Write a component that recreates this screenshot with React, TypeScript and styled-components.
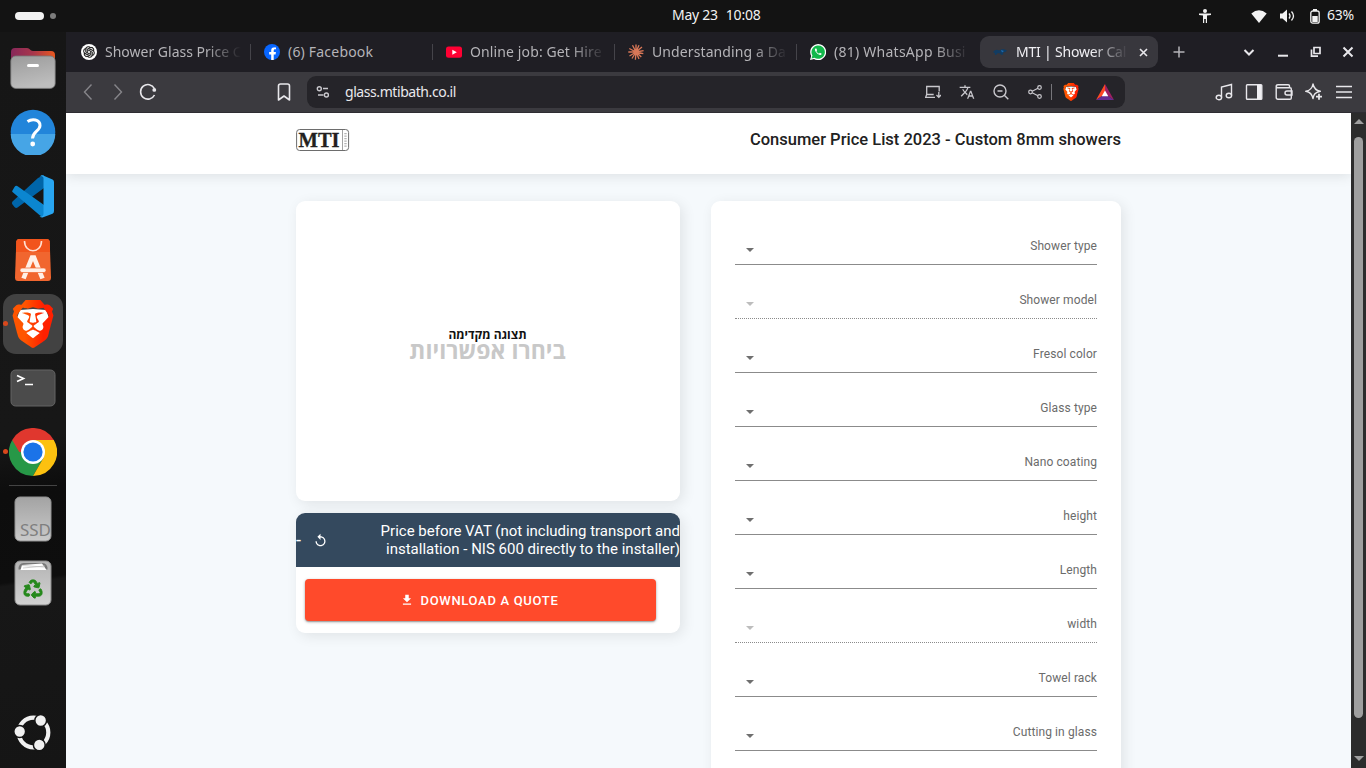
import React from 'react';
import styled, { createGlobalStyle } from 'styled-components';
import { SiBrave, SiOpenai } from 'react-icons/si';
import { FaRecycle, FaFacebookF } from 'react-icons/fa';
import { MdReplay, MdFileDownload, MdTranslate } from 'react-icons/md';

const GlobalStyle = createGlobalStyle`
  * { box-sizing: border-box; }
  body { margin: 0; overflow: hidden; background: #131313; }
`;

const uiFont = `'Noto Sans', 'Open Sans', sans-serif`;

const Desktop = styled.div`
  width: 1366px;
  height: 768px;
  display: flex;
  flex-direction: column;
  overflow: hidden;
  font-family: ${uiFont};
`;

const TopBar = styled.header`
  position: relative;
  height: 32px;
  flex: none;
  display: flex;
  align-items: center;
  justify-content: space-between;
  padding: 0 12px 0 15px;
  background: #131313;
  color: #f2f2f2;
`;

const Workspaces = styled.div`
  display: flex;
  align-items: center;
  gap: 6px;
`;

const ActiveSpace = styled.span`
  width: 29px;
  height: 8px;
  border-radius: 4px;
  background: #f2f2f2;
`;

const IdleSpace = styled.span`
  width: 6px;
  height: 6px;
  border-radius: 50%;
  background: #7d7d7d;
`;

const Clock = styled.div`
  position: absolute;
  left: 672px;
  top: 5px;
  display: flex;
  gap: 8px;
  font-size: 14px;
  line-height: 20px;
  letter-spacing: -0.25px;
`;

const Status = styled.div`
  display: flex;
  align-items: center;
  height: 32px;
  font-size: 14px;
  letter-spacing: -0.2px;
  svg { display: block; }
`;

const StatusIcon = styled.span<{ $gap: number }>`
  display: flex;
  margin-right: ${p => p.$gap}px;
`;

const BatteryText = styled.span`
  line-height: 18px;
  padding-bottom: 2px;
`;

const Workspace = styled.div`
  flex: 1;
  display: flex;
  min-height: 0;
`;

const Dock = styled.nav`
  width: 66px;
  flex: none;
  display: flex;
  flex-direction: column;
  align-items: center;
  padding: 4px 0 3px;
  background: linear-gradient(172deg, #161616 0%, #171717 55%, #0d0d0d 62%, #0e0e0e 74%, #171717 74.5%, #151515 100%);
`;

const DockItem = styled.div<{ $active?: boolean; $running?: boolean }>`
  position: relative;
  width: 60px;
  height: 60px;
  margin: 2px 0;
  flex: none;
  display: flex;
  align-items: center;
  justify-content: center;
  border-radius: 13px;
  background: ${p => (p.$active ? '#424242' : 'transparent')};
  svg { display: block; }
  &::before {
    content: '';
    display: ${p => (p.$running ? 'block' : 'none')};
    position: absolute;
    left: 0;
    top: 27px;
    width: 5px;
    height: 5px;
    border-radius: 50%;
    background: #d9481c;
  }
`;

const DockRule = styled.div`
  width: 48px;
  height: 1px;
  flex: none;
  margin: 1px 0;
  background: #444;
`;

const DockSpacer = styled.div`
  flex: 1;
`;

const Browser = styled.main`
  flex: 1;
  min-width: 0;
  display: flex;
  flex-direction: column;
`;

const TabStrip = styled.div`
  height: 40px;
  flex: none;
  display: flex;
  align-items: center;
  padding: 0 2px 0 3px;
  background: #1f1e24;
`;

const Tab = styled.div<{ $active?: boolean; $rule?: number; $width?: number }>`
  width: ${p => p.$width ?? 182}px;
  height: 32px;
  flex: none;
  padding: 0 ${p => (p.$active ? 8 : 10)}px 0 12px;
  display: flex;
  align-items: center;
  gap: 8px;
  border-radius: ${p => (p.$active ? 9 : 0)}px;
  color: ${p => (p.$active ? '#f0eff3' : '#b5b4b8')};
  background: ${p =>
    p.$active
      ? '#38373d'
      : p.$rule
        ? `linear-gradient(#45444a, #45444a) ${p.$rule}px 8px / 1px 16px no-repeat`
        : 'none'};
`;

const Favicon = styled.span`
  width: 16px;
  height: 16px;
  flex: none;
  display: flex;
  svg { display: block; }
`;

const TabTitle = styled.span<{ $spacing: number; $width: number; $fade: boolean }>`
  width: ${p => p.$width}px;
  flex: none;
  overflow: hidden;
  white-space: nowrap;
  font-size: 14px;
  line-height: 20px;
  letter-spacing: ${p => p.$spacing}px;
  mask-image: ${p => (p.$fade ? 'linear-gradient(90deg, #000 calc(100% - 36px), transparent)' : 'none')};
`;

const TabClose = styled.span`
  margin-left: auto;
  width: 16px;
  display: flex;
  justify-content: center;
`;

const NewTab = styled.span`
  width: 42px;
  display: flex;
  justify-content: center;
`;

const WindowButtons = styled.div`
  margin-left: auto;
  display: flex;
`;

const WindowButton = styled.span<{ $w: number }>`
  width: ${p => p.$w}px;
  display: flex;
  justify-content: center;
`;

const Toolbar = styled.div`
  height: 41px;
  flex: none;
  display: flex;
  align-items: center;
  padding: 0 7px 1px;
  background: #3b3a3f;
  border-bottom: 1px solid #2e2c32;
`;

const ToolButton = styled.span<{ $w?: number; $ml?: number }>`
  width: ${p => p.$w ?? 30}px;
  margin-left: ${p => p.$ml ?? 0}px;
  flex: none;
  display: flex;
  justify-content: center;
  svg { display: block; }
`;

const AddressBar = styled.div`
  width: 818px;
  height: 32px;
  flex: none;
  margin-left: 8px;
  margin-right: 84px;
  padding-right: 2px;
  display: flex;
  align-items: center;
  border-radius: 9px;
  background: #252429;
  color: #c9c8cd;
`;

const Address = styled.span`
  flex: 1;
  padding-left: 6px;
  color: #e9e8ec;
  font-size: 14px;
  letter-spacing: -0.43px;
`;

const AddressRule = styled.span`
  width: 1px;
  height: 16px;
  margin-left: -1px;
  margin-right: 3px;
  background: #77767b;
`;

const Viewport = styled.div`
  flex: 1;
  min-height: 0;
  display: flex;
`;

const Page = styled.div`
  width: 1285px;
  flex: none;
  overflow: hidden;
  background: #f5f9fc;
  font-family: Roboto, sans-serif;
`;

const SiteHeader = styled.div`
  height: 61px;
  padding: 0 230px;
  display: flex;
  justify-content: space-between;
  background: #fff;
  box-shadow: 0 2px 12px rgba(0, 0, 0, 0.1);
`;

const LogoSlot = styled.span`
  padding-top: 15px;
`;

const SiteTitle = styled.h1`
  margin: 0;
  padding-top: 17px;
  color: #212121;
  font-size: 16.5px;
  line-height: 20px;
  font-weight: 500;
  white-space: nowrap;
`;

const Columns = styled.div`
  display: flex;
  gap: 31px;
  align-items: flex-start;
  padding: 27px 230px 0;
`;

const LeftColumn = styled.div`
  width: 384px;
  display: flex;
  flex-direction: column;
  gap: 12px;
`;

const Card = styled.section`
  border-radius: 9px;
  background: #fff;
  box-shadow: 3px 3px 14px rgba(0, 0, 0, 0.09);
  overflow: hidden;
`;

const Preview = styled(Card)`
  height: 300px;
  display: flex;
  flex-direction: column;
  align-items: center;
  padding-top: 127px;
  padding-left: 1px;
  padding-right: 2px;
  direction: rtl;
  font-family: 'Open Sans', 'Noto Sans', sans-serif;
`;

const PreviewCaption = styled.div`
  color: #111;
  font-size: 12px;
  line-height: 14px;
  font-weight: 700;
`;

const PreviewHint = styled.div`
  margin-top: -3px;
  color: #c8c8c8;
  font-size: 23px;
  line-height: 22px;
  font-weight: 700;
`;

const PriceCard = styled(Card)`
  height: 120px;
`;

const PriceBar = styled.div`
  height: 54px;
  display: flex;
  align-items: center;
  color: #fff;
  background: #34495e;
`;

const PriceValue = styled.span`
  width: 17px;
  font-size: 18px;
  line-height: 18px;
`;

const PriceLabel = styled.span`
  margin-left: auto;
  text-align: right;
  font-size: 15px;
  line-height: 18px;
  white-space: nowrap;
`;

const DownloadButton = styled.button`
  width: 351px;
  height: 42px;
  margin: 12px 0 0 9px;
  padding: 1px 2px 0 0;
  display: flex;
  align-items: center;
  justify-content: center;
  gap: 7px;
  border: 0;
  border-radius: 4px;
  color: #fff;
  background: #ff4a2b;
  box-shadow: 0 1px 3px rgba(0, 0, 0, 0.35), 0 1px 1px rgba(0, 0, 0, 0.15);
  font: 500 13px/20px Roboto, sans-serif;
  letter-spacing: 0.68px;
  svg { margin: -2px 0 0 -1px; }
`;

const FormCard = styled(Card)`
  width: 410px;
  height: 640px;
  padding: 10px 24px;
`;

const Field = styled.div<{ $disabled?: boolean }>`
  height: 54px;
  display: flex;
  justify-content: space-between;
  padding: 27px 0 0 11px;
  border-bottom: 1px ${p => (p.$disabled ? 'dotted' : 'solid')} #8b8b8b;
`;

const Caret = styled.span<{ $disabled?: boolean }>`
  width: 0;
  height: 0;
  margin-top: 10px;
  border: 4px solid transparent;
  border-bottom-width: 0;
  border-top-color: ${p => (p.$disabled ? '#bdbdbd' : '#6f6f6f')};
`;

const FieldLabel = styled.span`
  color: #6b6b6b;
  font-size: 12px;
  line-height: 16px;
  letter-spacing: 0.1px;
`;

const Scrollbar = styled.div`
  width: 15px;
  flex: none;
  display: flex;
  flex-direction: column;
  align-items: center;
  padding: 6px 0 7px;
  background: #2c2c2c;
`;

const ScrollArrow = styled.span<{ $down?: boolean }>`
  width: 0;
  height: 0;
  border: 5px solid transparent;
  ${p =>
    p.$down
      ? 'border-bottom: 0; border-top-color: #9f9f9f;'
      : 'border-top: 0; border-bottom-color: #9f9f9f;'}
`;

const ScrollThumb = styled.span`
  width: 9px;
  height: 581px;
  margin: 13px 0 auto;
  border-radius: 5px;
  background: #9f9f9f;
`;

const FilesIcon = () => (
  <svg width="46" height="42" viewBox="0 0 46 42">
    <defs>
      <linearGradient id="fTab" x1="0" x2="1">
        <stop offset="0" stopColor="#87285a" />
        <stop offset="0.5" stopColor="#a8364c" />
        <stop offset="1" stopColor="#e9581f" />
      </linearGradient>
      <linearGradient id="fBody" x1="0" y1="0" x2="0.3" y2="1">
        <stop offset="0" stopColor="#9b9b9b" />
        <stop offset="1" stopColor="#bdbdbd" />
      </linearGradient>
    </defs>
    <path d="M1 14V5a4 4 0 0 1 4-4h12c3 0 3 3 6 3h18a4 4 0 0 1 4 4v8z" fill="url(#fTab)" />
    <rect x="0.8" y="9" width="44.4" height="32.4" rx="5" fill="url(#fBody)" stroke="#777" strokeWidth="0.8" />
    <rect x="17" y="17" width="12" height="3" rx="1.5" fill="#fff" />
  </svg>
);

const HelpIcon = () => (
  <svg width="46" height="46" viewBox="0 0 46 46">
    <circle cx="23" cy="23" r="22.3" fill="#2285da" />
    <path d="M.7 25h44.600a22.300 22.300 0 0 1-44.600 0z" fill="#46a5e6" />
    <path d="M17.500 12.500C22 9.500 30 10 30 16.500c0 5.500-7.500 6-7.500 13" fill="none" stroke="#fff" strokeWidth="3" />
    <circle cx="22.700" cy="35" r="2.400" fill="#fff" />
  </svg>
);

const VsCodeIcon = () => (
  <svg width="44" height="44" viewBox="0 0 44 44">
    <path d="M1.500 27.500L27 4 33 1v13L6.500 33.500Q5 34.500 3.500 33L1.500 30.500q-1.300-1.500 0-3z" fill="#0065a9" />
    <path d="M1.500 16.500L3.500 13q1.500-2 3.500-.5L33 31v12l-4-1.500L1.500 18q-.8-.8 0-1.500z" fill="#0b86d0" />
    <path d="M31 1l10.500 4.500q1.500.8 1.500 2.500v29q0 2-1.500 2.800L31.500 43.500q-1.500.3-3-1.500 4 1 4-2V4q0-2.500-4-1.500z" fill="#28a5f0" />
  </svg>
);

const AppCenterIcon = () => (
  <svg width="38" height="44" viewBox="0 0 38 44">
    <path d="M5 1h28q2.500 0 2.700 2.500l1.300 36q0 3.500-3 3.500H4q-3 0-3-3.500l1.300-36Q2.500 1 5 1z" fill="#f1662f" />
    <path d="M5 1h28q2.500 0 2.700 2.500L36 14H2l.3-10.500Q2.500 1 5 1z" fill="#f2541c" />
    <path d="M10.500 3c0 13 17 13 17 0" fill="none" stroke="#ffe1d3" strokeWidth="1.600" />
    <path d="M9.500 40.500L18 19.500h2l8.500 21" fill="none" stroke="#fff0e8" strokeWidth="4.600" />
    <rect x="6" y="30" width="26" height="4.500" rx="2" fill="#fff0e8" stroke="#f1662f" strokeWidth="0.700" />
  </svg>
);

const BraveIcon = ({ size, id }: { size: number; id: string }) => (
  <svg width={size} height={size} viewBox="0 0 24 24">
    <defs>
      <linearGradient id={id} x1="0" x2="1">
        <stop offset="0.3" stopColor="#ff5500" />
        <stop offset="0.75" stopColor="#ff2000" />
      </linearGradient>
    </defs>
    <path d="M5.500 5l6.500-.5L18.500 5 20 9l-3 8-5 4-5-4-3-8z" fill="#fff" />
    <SiBrave size={24} style={{ fill: `url(#${id})` }} />
  </svg>
);

const TerminalIcon = () => (
  <svg width="46" height="38" viewBox="0 0 46 38">
    <rect x="1" y="1" width="44" height="36" rx="4.500" fill="#4b4b4b" stroke="#646464" />
    <path d="M7 6.500l6.500 3L7 12.500M15 15.500h8" fill="none" stroke="#fff" strokeWidth="1.700" />
  </svg>
);

const ChromeIcon = () => (
  <svg width="48" height="48" viewBox="0 0 48 48">
    <path d="M24 24h-4L3.200 12a24 24 0 0 0 20.800 36l10.400-18z" fill="#279847" />
    <path d="M24 12h20.800A24 24 0 0 1 24 48l10.400-18z" fill="#fcc110" />
    <path d="M3.200 12h41.600A24 24 0 0 0 3.200 12z" fill="#e0372e" />
    <path d="M3.200 12H24v12H10.200z" fill="#e0372e" />
    <circle cx="24" cy="24" r="12" fill="#fff" />
    <circle cx="24" cy="24" r="9.600" fill="#1b73e8" />
  </svg>
);

const SsdIcon = () => (
  <svg width="38" height="46" viewBox="0 0 38 46">
    <defs>
      <linearGradient id="ssd" x1="0" x2="0" y1="0" y2="1">
        <stop offset="0" stopColor="#a3a3a3" />
        <stop offset="1" stopColor="#cacaca" />
      </linearGradient>
    </defs>
    <rect x="1" y="1" width="36" height="44" rx="5" fill="url(#ssd)" stroke="#929292" />
    <text x="6" y="39.500" fill="#7f7f7f" fontFamily="Noto Sans, sans-serif" fontSize="16" textLength="31" lengthAdjust="spacingAndGlyphs">SSD</text>
  </svg>
);

const TrashIcon = () => (
  <svg width="38" height="46" viewBox="0 0 38 46">
    <defs>
      <linearGradient id="bin" x1="0" x2="0" y1="0" y2="1">
        <stop offset="0" stopColor="#b4b4b4" />
        <stop offset="1" stopColor="#d2d2d2" />
      </linearGradient>
    </defs>
    <rect x="1" y="1" width="36" height="44" rx="5" fill="url(#bin)" stroke="#8d8d8d" />
    <path d="M4.500 9.500q0-6.500 5-6.500h19q5 0 5 6.500z" fill="#777" />
    <path d="M6.500 10L8 5l20-1.500L32.500 10z" fill="#fff" />
    <path d="M8 5.500l22 1.500M9 8l22-2" stroke="#bbb" strokeWidth="0.700" />
    <FaRecycle x={9.500} y={19.500} size={19} color="#26891c" stroke="#26891c" strokeWidth={26} />
  </svg>
);

const UbuntuIcon = () => (
  <svg width="38" height="38" viewBox="0 0 38 38">
    <circle cx="19.500" cy="18.500" r="14.800" fill="none" stroke="#f1f1f1" strokeWidth="4.200" />
    <g fill="#f1f1f1" stroke="#151515" strokeWidth="1.500">
      <circle cx="5.700" cy="17.500" r="5.900" />
      <circle cx="26.700" cy="6.500" r="5.900" />
      <circle cx="25.300" cy="30.900" r="5.900" />
    </g>
  </svg>
);

const OpenAiFavicon = () => (
  <svg width="16" height="16" viewBox="0 0 16 16">
    <circle cx="8" cy="8" r="8" fill="#fff" />
    <SiOpenai x={2.200} y={2.200} size={11.600} color="#111" stroke="#111" strokeWidth={0.7} />
  </svg>
);

const FacebookFavicon = () => (
  <svg width="16" height="16" viewBox="0 0 16 16">
    <circle cx="8" cy="8" r="8" fill="#0866ff" />
    <FaFacebookF x={2.200} y={3.200} size={12.800} color="#fff" />
  </svg>
);

const YoutubeFavicon = () => (
  <svg width="16" height="16" viewBox="0 0 16 16">
    <rect y="2.500" width="16" height="11.300" rx="2.500" fill="#ff0033" />
    <path d="M6.300 5.700v5L10.800 8.200z" fill="#fff" />
  </svg>
);

const ClaudeFavicon = () => (
  <svg width="16" height="16" viewBox="0 0 16 16">
    <path
      d="M8 8V.4M8 8l3-6.700M8 8l6-5M8 8l7.600-1.400M8 8l7.300 1.700M8 8l5.300 5M8 8l3 7M8 8l-.6 7.700M8 8l-4 6.500M8 8l-6.500 4M8 8L.3 8M8 8L1.300 4.500M8 8L4.500 1.200"
      stroke="#d97757"
      strokeWidth="1.350"
    />
  </svg>
);

const WhatsappFavicon = () => (
  <svg width="16" height="16" viewBox="0 0 16 16">
    <path d="M0 16l1.200-4A8 8 0 1 1 4 14.900z" fill="#fff" />
    <path d="M1.500 14.500l.9-3A6.700 6.700 0 1 1 4.500 13.700z" fill="#12b84b" />
    <path d="M5.300 4.500q-1 1 .2 3 1.800 2.800 4.500 3.500 1.300.2 1.700-1.300L9.900 8.700l-.9 1Q7.300 9 6.400 7.200l.7-.9-.7-1.800z" fill="#fff" />
  </svg>
);

const MtiFavicon = () => (
  <svg width="16" height="16" viewBox="0 0 16 16">
    <path d="M1 8q3-3.500 6-1.500 4-3 8 0-1 2-4 2 1 2-1.500 2.500Q8 9 6 9q-2 2.500-3 2 .5-2-2-3z" fill="#123c62" />
    <path d="M9 6l3 1-2 1.500z" fill="#1c6bb0" />
  </svg>
);

const MtiLogo = () => (
  <svg width="54" height="24" viewBox="0 0 54 24" style={{ display: 'block' }}>
    <rect x="0.600" y="1.500" width="52" height="21" rx="3" fill="#fff" stroke="#6d6d6d" />
    <path d="M46.500 2v20" stroke="#8c8c8c" strokeWidth="0.800" />
    <path d="M49.500 5v14" stroke="#b4b4b4" strokeWidth="2.400" strokeDasharray="1.300 1.200" />
    <text x="2.600" y="18.800" fill="#231f20" stroke="#231f20" strokeWidth="0.300" fontFamily="Liberation Serif, serif" fontWeight="700" fontSize="20.500" textLength="41" lengthAdjust="spacingAndGlyphs">MTI</text>
  </svg>
);

type LineProps = { w?: number; h?: number; color?: string; sw?: number; children: React.ReactNode };

const Line = ({ w = 18, h = 18, color = '#e8e7eb', sw = 1.4, children }: LineProps) => (
  <svg width={w} height={h} viewBox={`0 0 ${w} ${h}`} fill="none" stroke={color} strokeWidth={sw}>
    {children}
  </svg>
);

const tabs = [
  { title: 'Shower Glass Price C', icon: <OpenAiFavicon />, spacing: 0, width: 183, rule: 181, fade: true },
  { title: '(6) Facebook', icon: <FacebookFavicon />, spacing: 0.2, width: 182, rule: 180, fade: false },
  { title: 'Online job: Get Hire', icon: <YoutubeFavicon />, spacing: 0.12, width: 182, rule: 180, fade: true },
  { title: 'Understanding a Da', icon: <ClaudeFavicon />, spacing: 0.1, width: 182, rule: 180, fade: true },
  { title: '(81) WhatsApp Busi', icon: <WhatsappFavicon />, spacing: 0.25, width: 182, rule: 0, fade: true },
];

const fields = [
  { label: 'Shower type' },
  { label: 'Shower model', disabled: true },
  { label: 'Fresol color' },
  { label: 'Glass type' },
  { label: 'Nano coating' },
  { label: 'height' },
  { label: 'Length' },
  { label: 'width', disabled: true },
  { label: 'Towel rack' },
  { label: 'Cutting in glass' },
];

export default function App() {
  return (
    <Desktop>
      <GlobalStyle />
      <TopBar>
        <Workspaces>
          <ActiveSpace />
          <IdleSpace />
        </Workspaces>
        <Clock>
          <span>May 23</span>
          <span>10:08</span>
        </Clock>
        <Status>
          <StatusIcon $gap={40}>
            <svg width="12" height="14" viewBox="0 0 12 14" fill="#f2f2f2">
              <circle cx="6" cy="2" r="2" />
              <path d="M0 4.500h12V6L8 6.500V14H6.800v-4H5.200v4H4V6.500L0 6z" />
            </svg>
          </StatusIcon>
          <StatusIcon $gap={13}>
            <svg width="16" height="13" viewBox="0 0 16 13">
              <path d="M.3 3.500Q8-2.800 15.700 3.500L8 13z" fill="#f2f2f2" />
            </svg>
          </StatusIcon>
          <StatusIcon $gap={15}>
            <svg width="15" height="14" viewBox="0 0 15 14">
              <path d="M0 4.500h2.500L7 .5v13L2.500 9.500H0z" fill="#f2f2f2" />
              <path d="M9 4.500q2 2.500 0 5M11.500 2.500q4 4.500 0 9" fill="none" stroke="#f2f2f2" strokeWidth="1.300" />
            </svg>
          </StatusIcon>
          <StatusIcon $gap={7}>
            <svg width="10" height="15" viewBox="0 0 10 15">
              <rect x="0.800" y="2" width="8.400" height="12.200" rx="2" fill="none" stroke="#f2f2f2" strokeWidth="1.300" />
              <rect x="3" width="4" height="2" fill="#f2f2f2" />
              <rect x="2.300" y="7" width="5.400" height="6" fill="#f2f2f2" />
            </svg>
          </StatusIcon>
          <BatteryText>63%</BatteryText>
        </Status>
      </TopBar>
      <Workspace>
        <Dock>
          <DockItem><FilesIcon /></DockItem>
          <DockItem><HelpIcon /></DockItem>
          <DockItem><VsCodeIcon /></DockItem>
          <DockItem><AppCenterIcon /></DockItem>
          <DockItem $active $running><BraveIcon size={48} id="braveDock" /></DockItem>
          <DockItem><TerminalIcon /></DockItem>
          <DockItem $running><ChromeIcon /></DockItem>
          <DockRule />
          <DockItem><SsdIcon /></DockItem>
          <DockItem><TrashIcon /></DockItem>
          <DockSpacer />
          <DockItem><UbuntuIcon /></DockItem>
        </Dock>
        <Browser>
          <TabStrip>
            {tabs.map(tab => (
              <Tab key={tab.title} $rule={tab.rule} $width={tab.width}>
                <Favicon>{tab.icon}</Favicon>
                <TabTitle $spacing={tab.spacing} $width={136} $fade={tab.fade}>{tab.title}</TabTitle>
              </Tab>
            ))}
            <Tab $active $width={178}>
              <Favicon><MtiFavicon /></Favicon>
              <TabTitle $spacing={-0.2} $width={112} $fade>MTI | Shower Cal</TabTitle>
              <TabClose>
                <Line w={9} h={9} sw={1.6}><path d="M1 1l7 7M8 1L1 8" /></Line>
              </TabClose>
            </Tab>
            <NewTab>
              <Line w={12} h={12} color="#b5b4b8" sw={1.5}><path d="M6 .5v11M.5 6h11" /></Line>
            </NewTab>
            <WindowButtons>
              <WindowButton $w={35}><Line w={12} h={12} sw={2}><path d="M1.500 4L6 8.500 10.500 4" /></Line></WindowButton>
              <WindowButton $w={33}><Line w={12} h={12} sw={2}><path d="M1 9.700h10" /></Line></WindowButton>
              <WindowButton $w={33}><Line w={12} h={12} sw={1.700}><path d="M4 1.500h6v6H4zM1.500 3.500v6.700H8" /></Line></WindowButton>
              <WindowButton $w={32}><Line w={12} h={12} sw={2}><path d="M1.500 1.500l9 9M10.500 1.500l-9 9" /></Line></WindowButton>
            </WindowButtons>
          </TabStrip>
          <Toolbar>
            <ToolButton><Line color="#86858a"><path d="M12.500 1.500L5.500 9l7 7.500" /></Line></ToolButton>
            <ToolButton><Line color="#86858a"><path d="M5.500 1.500l7 7.500-7 7.500" /></Line></ToolButton>
            <ToolButton>
              <Line sw={1.600}>
                <path d="M15.500 12A7.300 7.300 0 1 1 15.400 5.500" />
                <circle cx="15.300" cy="6.900" r="1.900" fill="#e8e7eb" stroke="none" />
              </Line>
            </ToolButton>
            <ToolButton $ml={106}><Line sw={1.600}><path d="M3.500 17V3Q3.500 1 5.500 1h7q2 0 2 2v14L9 13z" strokeLinejoin="round" /></Line></ToolButton>
            <AddressBar>
              <ToolButton $w={32}>
                <Line w={14} h={14} color="#c9c8cd">
                  <circle cx="3.300" cy="3.800" r="2" />
                  <path d="M7 3.500h5M2 10h5.500" />
                  <circle cx="10.400" cy="10" r="2" />
                </Line>
              </ToolButton>
              <Address>glass.mtibath.co.il</Address>
              <ToolButton $w={34}>
                <Line w={16} h={14} color="#c9c8cd" sw={1.300}>
                  <path d="M10 12.300H.7l1-2.800V1.500h12.500v5M1.700 9.500h7M13.800 7v5.300M11.500 10l2.300 2.400L16 10" />
                </Line>
              </ToolButton>
              <ToolButton $w={34}><MdTranslate size={16} /></ToolButton>
              <ToolButton $w={34}>
                <Line w={16} h={16} color="#c9c8cd"><circle cx="7" cy="7" r="6" /><path d="M4.500 7h5M11.300 11.300l4 4" /></Line>
              </ToolButton>
              <ToolButton $w={34}>
                <Line w={14} h={14} color="#c9c8cd" sw={1.200}>
                  <circle cx="2.500" cy="7" r="1.800" /><circle cx="11.500" cy="2.500" r="1.800" /><circle cx="11.500" cy="11.500" r="1.800" />
                  <path d="M4.200 6.200l5.700-2.900M4.200 7.800l5.700 2.900" />
                </Line>
              </ToolButton>
              <AddressRule />
              <ToolButton $w={32}><BraveIcon size={18} id="braveBar" /></ToolButton>
              <ToolButton $w={36}>
                <svg width="18" height="16" viewBox="0 0 18 16">
                  <path d="M9 0L0 16l9-6z" fill="#ff4724" />
                  <path d="M9 0l9 16-9-6z" fill="#9e1f63" />
                  <path d="M0 16l9-6 9 6z" fill="#662d91" />
                  <path d="M9 6.500l3.300 5.700H5.700z" fill="#fff" />
                </svg>
              </ToolButton>
            </AddressBar>
            <ToolButton>
              <Line><path d="M6.500 14.500V4L16.500 1.500v11" /><ellipse cx="3.900" cy="14.500" rx="2.700" ry="2.200" /><ellipse cx="13.900" cy="12.500" rx="2.700" ry="2.200" /></Line>
            </ToolButton>
            <ToolButton>
              <Line><rect x="1.500" y="1.700" width="15.300" height="14.600" rx="0.800" /><rect x="12" y="2" width="4.500" height="14" fill="#f0eff3" stroke="none" /></Line>
            </ToolButton>
            <ToolButton>
              <Line><path d="M14.500 4.500V3q0-1.300-1.300-1.300H3Q1.200 1.700 1.200 3.200T3 4.700h12q1.300 0 1.300 1.300v9q0 1.300-1.300 1.300H3q-1.800 0-1.800-1.800V3M17 8h-5q-2 0-2 2t2 2h5z" /></Line>
            </ToolButton>
            <ToolButton>
              <Line><path d="M8 1q1.200 6.200 7.300 7.300-4 .8-5.600 2.700-1 1.200-1.700 4.600Q6.900 9.500.8 8.300 6.900 7.200 8 1z" strokeLinejoin="round" /><path d="M14 10.700v6M11 13.700h6" strokeWidth="1.800" /></Line>
            </ToolButton>
            <ToolButton><Line sw={1.500}><path d="M1 3.500h16M1 9h16M1 14.500h16" /></Line></ToolButton>
          </Toolbar>
          <Viewport>
            <Page>
              <SiteHeader>
                <LogoSlot><MtiLogo /></LogoSlot>
                <SiteTitle>Consumer Price List 2023 - Custom 8mm showers</SiteTitle>
              </SiteHeader>
              <Columns>
                <LeftColumn>
                  <Preview>
                    <PreviewCaption>תצוגה מקדימה</PreviewCaption>
                    <PreviewHint>ביחרו אפשרויות</PreviewHint>
                  </Preview>
                  <PriceCard>
                    <PriceBar>
                      <PriceValue>-</PriceValue>
                      <MdReplay size={15} />
                      <PriceLabel>
                        Price before VAT (not including transport and
                        <br />
                        installation - NIS 600 directly to the installer)
                      </PriceLabel>
                    </PriceBar>
                    <DownloadButton>
                      <MdFileDownload size={14} />
                      DOWNLOAD A QUOTE
                    </DownloadButton>
                  </PriceCard>
                </LeftColumn>
                <FormCard>
                  {fields.map(f => (
                    <Field key={f.label} $disabled={f.disabled}>
                      <Caret $disabled={f.disabled} />
                      <FieldLabel>{f.label}</FieldLabel>
                    </Field>
                  ))}
                </FormCard>
              </Columns>
            </Page>
            <Scrollbar>
              <ScrollArrow />
              <ScrollThumb />
              <ScrollArrow $down />
            </Scrollbar>
          </Viewport>
        </Browser>
      </Workspace>
    </Desktop>
  );
}
